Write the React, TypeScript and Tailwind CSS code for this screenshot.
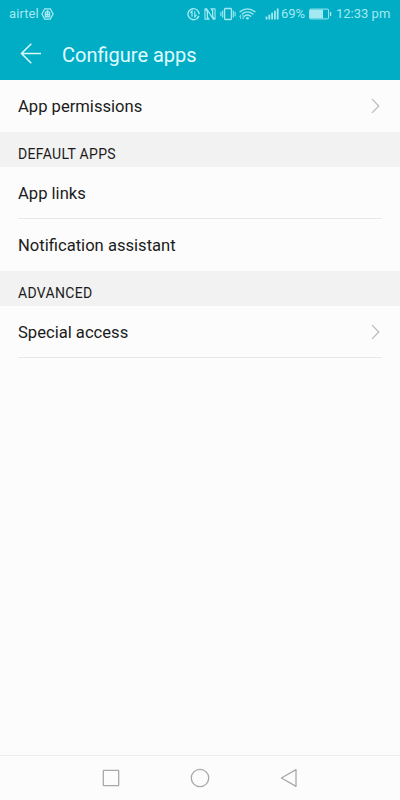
import type { ReactNode } from 'react';

function StatusBar() {
  return (
    <div className="flex h-7 items-center pl-[9px] pr-[9px] text-[13px] leading-7 text-[#a3e9f1]">
      <span className="w-[30px] whitespace-nowrap tracking-[0.1px]">airtel</span>
      <svg className="ml-[2px]" width="13" height="14" viewBox="0 0 13 14" fill="none" stroke="currentColor">
        <path d="M3.7 1.8h5.6L12.1 7l-2.8 5.2H3.7L.9 7z" strokeWidth="1.3" />
        <path d="M4.4 9.8V5.5L6.5 3.8l2.1 1.7v4.3zM6.5 4v6M4.4 7.5h4.2" strokeWidth="1.4" />
      </svg>

      <div className="ml-auto flex items-center">
        {/* data saver */}
        <svg width="13" height="14" viewBox="0 0 13 14" fill="none" stroke="currentColor">
          <path d="M8.9 12.1A5.5 5.5 0 1 1 12 7.2" strokeWidth="1.4" />
          <path d="M5 9.8V4.2L3.4 6M7.8 4.2v5.6L9.5 8" strokeWidth="1.2" />
          <path d="M9.4 12.3l2.6-3.2" strokeWidth="1.6" />
        </svg>

        {/* nfc */}
        <svg className="ml-[4px]" width="12" height="14" viewBox="0 0 12 14" fill="currentColor">
          <path d="M.4 2Q.4 1.2 1.2 1.2H3L8 9V4.2L6.2 1.2h4.6q.8 0 .8.8v10q0 .8-.8.8H9L4 5v4.8l1.8 3H1.2q-.8 0-.8-.8zM1.5 2.9v8.8h1.2V4.6zM10.5 11.1V2.3H9.3v7.1z" fillRule="evenodd" />
        </svg>

        {/* vibrate */}
        <svg className="ml-[4px]" width="16" height="14" viewBox="0 0 16 14" fill="none" stroke="currentColor">
          <rect x="4.6" y="1.5" width="6.8" height="11" rx="0.7" strokeWidth="1.3" />
          <path d="M2.7 3.5v7M13.3 3.5v7M.9 4.8v4.4M15.1 4.8v4.4" strokeWidth="1.1" />
        </svg>

        {/* wifi */}
        <svg className="ml-[3px]" width="17" height="14" viewBox="0 0 17 14" fill="none" stroke="currentColor" strokeLinecap="round">
          <path d="M1 4.7Q8.5-.9 16 4.7M3.2 7Q8.5 2.8 13.8 7M5.4 9.2Q8.5 6.9 11.6 9.2" strokeWidth="1.4" />
          <circle cx="8.5" cy="11.3" r="1.3" fill="currentColor" stroke="none" />
          <path d="M1.6 11.8V8.2L.6 9.4M4 8.2v3.8l1-1.2" strokeWidth="0.8" />
        </svg>

        {/* signal */}
        <svg className="ml-[9px]" width="14" height="14" viewBox="0 0 14 14" fill="currentColor">
          <path d="M.6 9.6h1.8v2.8H.6zM3.4 7.8h1.8v4.6H3.4zM6.2 5.8H8v6.6H6.2zM9 3.7h1.8v8.7H9zM11.8 1.4h1.8v11h-1.8z" />
        </svg>

        <span className="ml-[2px] w-[25px] whitespace-nowrap">69%</span>

        {/* battery */}
        <svg className="ml-[3px]" width="23" height="12" viewBox="0 0 23 12" fill="none" stroke="currentColor">
          <rect x=".6" y="1.1" width="19" height="9.8" rx="1" strokeWidth="1" />
          <path d="M1 1.8h13v8.4H1z" fill="currentColor" stroke="none" />
          <path d="M21.6 4v4" strokeWidth="1.3" />
        </svg>

        <span className="ml-[4px] w-[55px] whitespace-nowrap">12:33 pm</span>
      </div>
    </div>
  );
}

function Row({ label, arrow }: { label: string; arrow?: boolean }) {
  return (
    <div className="flex h-[52px] items-center justify-between pl-[18px] pr-[20px]">
      <span className="pt-[2px] text-[16.6px] leading-6 text-[#1b1b1b]">{label}</span>
      {arrow && (
        <svg width="9" height="16" viewBox="0 0 9 16" fill="none" stroke="#b9b9b9" strokeWidth="1.2">
          <path d="M1 1.2L7.8 8 1 14.8" />
        </svg>
      )}
    </div>
  );
}

function SectionTitle({ children }: { children: ReactNode }) {
  return (
    <h2 className="flex h-[35px] items-center bg-[#f2f2f2] pl-[18px] pt-[8px] text-[14px] font-normal leading-5 tracking-[0.32px] text-[#1b1b1b]">
      {children}
    </h2>
  );
}

function Divider() {
  return <div className="mx-[18px] -mt-px h-px bg-[#e8e8e8]" />;
}

export default function App() {
  return (
    <div className="flex h-[800px] w-[400px] flex-col overflow-hidden bg-[#fcfcfc] font-['Roboto',sans-serif]">
      {/* HEADER */}
      <header className="h-20 bg-[#00adc5]">
        <StatusBar />
        <div className="flex h-[52px] items-center pl-[20px]">
          <svg width="22" height="22" viewBox="0 0 22 22" fill="none" stroke="#d9fbff" strokeWidth="1.5">
            <path d="M21 10.5H1.5M11.3.7L1.5 10.5l9.8 9.8" />
          </svg>
          <h1 className="ml-[20px] pt-px text-[20px] leading-7 text-[#e0fcff]">Configure apps</h1>
        </div>
      </header>

      {/* SETTINGS */}
      <main className="flex-1">
        <Row label="App permissions" arrow />
        <SectionTitle>DEFAULT APPS</SectionTitle>
        <Row label="App links" />
        <Divider />
        <Row label="Notification assistant" />
        <SectionTitle>ADVANCED</SectionTitle>
        <Row label="Special access" arrow />
        <Divider />
      </main>

      {/* NAVIGATION */}
      <nav className="flex h-[45px] items-center justify-between border-t border-[#ececec] px-[101px]">
        <svg width="20" height="20" viewBox="0 0 20 20" fill="none" stroke="#a8a8a8" strokeWidth="1.3">
          <rect x="2.3" y="2.3" width="15.4" height="15.4" rx="0.6" />
        </svg>
        <svg width="20" height="20" viewBox="0 0 20 20" fill="none" stroke="#a8a8a8" strokeWidth="1.3">
          <circle cx="10" cy="10" r="8.7" />
        </svg>
        <svg width="20" height="20" viewBox="0 0 20 20" fill="none" stroke="#a8a8a8" strokeWidth="1.3" strokeLinejoin="round">
          <path d="M17 1.6v16.8L2.4 10z" />
        </svg>
      </nav>
    </div>
  );
}
